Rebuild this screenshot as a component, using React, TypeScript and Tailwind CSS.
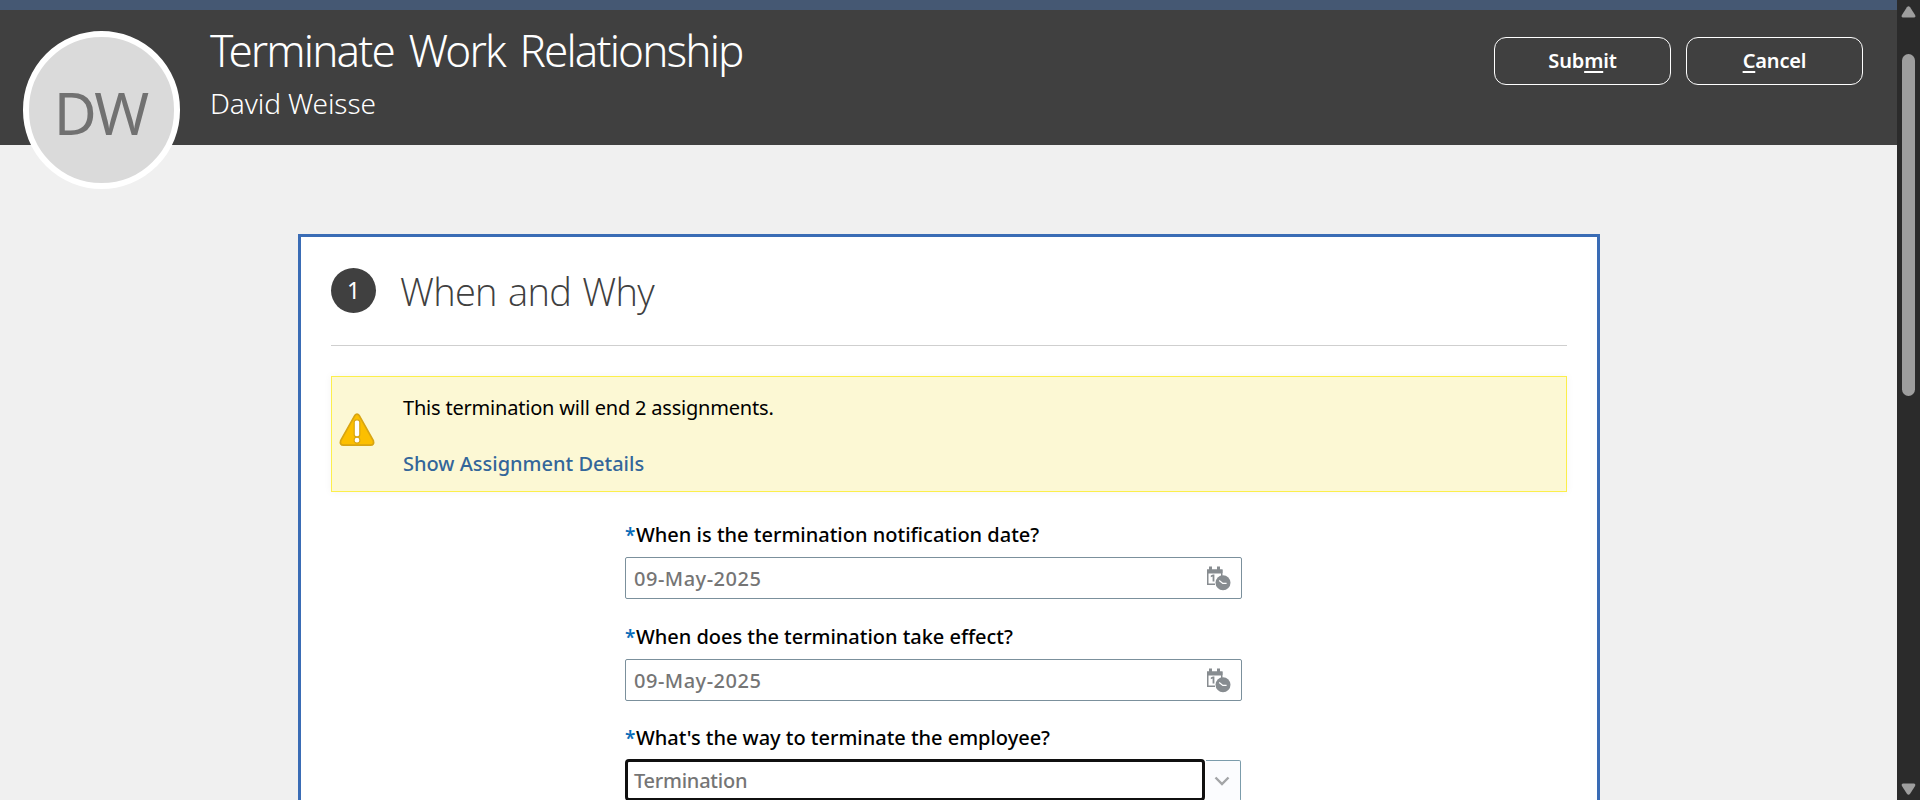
import type { ReactNode } from "react";

function WarningIcon() {
  return (
    <svg width="36" height="34" viewBox="0 0 36 34" className="block">
      <path
        d="M15.7 2.6Q18 -0.4 20.3 2.6L34.3 27.6Q35.6 32 31.4 32.2H4.6Q0.4 32 1.7 27.6Z"
        fill="#fcbf00"
        stroke="#d8a512"
        strokeWidth="1.7"
      />
      <rect x="15.2" y="6.8" width="5.6" height="17" rx="2.4" fill="#fff" stroke="#d8a512" strokeWidth="1.2" />
      <circle cx="18" cy="27.2" r="2.9" fill="#fff" stroke="#d8a512" strokeWidth="1.1" />
    </svg>
  );
}

function CalendarClockIcon() {
  return (
    <svg width="25" height="25" viewBox="0 0 25 25" className="block">
      <path d="M1 3.5H16.5V10H15V7.5H2.5V17.5H9V19H1Z" fill="#878c90" />
      <path d="M1 3.5H16.5V7H1Z" fill="#878c90" />
      <rect x="3" y="0.5" width="3" height="4.5" fill="#878c90" />
      <rect x="11" y="0.5" width="3" height="4.5" fill="#878c90" />
      <path d="M4.8 9.6L7 8.4H8.4V15.6H6.6V10.4L4.8 11.2Z" fill="#878c90" />
      <circle cx="17" cy="16.8" r="7.5" fill="#878c90" />
      <path d="M13.2 14.4L16.8 17.4H20.6" fill="none" stroke="#fff" strokeWidth="1.3" />
    </svg>
  );
}

function HeaderButton({ children }: { children: ReactNode }) {
  return (
    <button className="flex h-12 w-[177px] items-center justify-center rounded-xl border border-white text-[20px] leading-6 font-semibold tracking-[-0.15px] text-white">
      <span>{children}</span>
    </button>
  );
}

function FieldLabel({ children, className }: { children: ReactNode; className: string }) {
  return (
    <div className="flex h-[30px] items-center text-[20px] leading-[30px] font-medium whitespace-nowrap text-black">
      <span className="w-[11px] text-[19px] font-semibold text-[#0a6cb8]">*</span>
      <span className={className}>{children}</span>
    </div>
  );
}

function DateInput({ value }: { value: string }) {
  return (
    <div className="mt-[7px] flex h-[42px] items-center justify-between rounded-[2px] border border-[#7b909c] bg-white pr-2.5 pl-2 text-[20px] font-medium text-[#757575]">
      <span className="pt-px leading-7 tracking-[0.5px]">{value}</span>
      <CalendarClockIcon />
    </div>
  );
}

function Scrollbar() {
  return (
    <div className="flex h-full w-[23px] shrink-0 flex-col items-center bg-[#2b2b2b]">
      <svg width="15" height="12" viewBox="0 0 15 12" className="mt-1.5 shrink-0">
        <path d="M5.9 1.2Q7.5 -0.6 9.1 1.2L14.1 9Q14.9 11.2 13 11.4H2Q0.1 11.2 0.9 9Z" fill="#9e9e9e" />
      </svg>
      <div className="mt-9 h-[342px] w-[13px] shrink-0 rounded-full bg-[#9e9e9e]" />
      <svg width="15" height="12" viewBox="0 0 15 12" className="mt-auto mb-[5px] shrink-0 rotate-180">
        <path d="M5.9 1.2Q7.5 -0.6 9.1 1.2L14.1 9Q14.9 11.2 13 11.4H2Q0.1 11.2 0.9 9Z" fill="#9e9e9e" />
      </svg>
    </div>
  );
}

export default function App() {
  return (
    <div className="flex h-[800px] w-[1920px] overflow-hidden bg-[#f0f0f0] font-['Noto_Sans',sans-serif]">
      <div className="flex h-full w-[1897px] flex-col overflow-hidden">
        <div className="h-2.5 shrink-0 bg-[#455873]" />
        <header className="flex h-[135px] shrink-0 items-start bg-[#404040] pr-[34px] pl-[23px] text-white">
          <div className="mt-[21px] flex h-[158px] w-[157px] shrink-0 items-center justify-center rounded-full border-6 border-white bg-[#dadada]">
            <span className="pt-1 pr-0.5 text-[59px] leading-[70px] tracking-[-2px] text-[#717171]">DW</span>
          </div>
          <div className="ml-[30px] flex-1 pt-3.5 whitespace-nowrap">
            <h1 className="text-[44px] leading-[52px] font-light tracking-[-1.85px] [word-spacing:5px]">
              Terminate Work Relationship
            </h1>
            <p className="mt-[9px] text-[28px] leading-9 font-light tracking-[-0.1px]">David Weisse</p>
          </div>
          <div className="mt-[27px] flex gap-[15px]">
            <HeaderButton>
              Sub<span className="underline decoration-2 underline-offset-[3px]">m</span>it
            </HeaderButton>
            <HeaderButton>
              <span className="underline decoration-2 underline-offset-[3px]">C</span>ancel
            </HeaderButton>
          </div>
        </header>

        <main className="ml-[298px] mt-[89px] h-[640px] w-[1302px] shrink-0 border-3 border-[#3a6cb5] bg-white px-[30px]">
          <div className="flex h-[109px] items-start border-b border-[#cfcfcf]">
            <div className="mt-[31px] flex size-[45px] items-center justify-center rounded-full bg-[#404040] pb-0.5 text-[23px] leading-7 text-white">
              1
            </div>
            <h2 className="mt-[30px] ml-6 font-['Open_Sans'] text-[38px] leading-[48px] font-light tracking-[-0.7px] text-[#404040] [word-spacing:2px]">
              When and Why
            </h2>
          </div>

          <section className="mt-[30px] flex h-[116px] items-center border border-[#fcef4b] bg-[#fcf8d4] pl-[7px] shadow-[0_0_8px_rgba(0,0,0,0.05)]">
            <div className="pb-2">
              <WarningIcon />
            </div>
            <div className="ml-7 flex flex-col gap-7 pt-1 text-[20px] leading-7">
              <p className="tracking-[-0.2px] text-black">This termination will end 2 assignments.</p>
              <a className="font-medium text-[#33669a]">Show Assignment Details</a>
            </div>
          </section>

          <form className="mt-7 ml-[294px] w-[617px]">
            <FieldLabel className="tracking-normal">When is the termination notification date?</FieldLabel>
            <DateInput value="09-May-2025" />

            <div className="mt-[23px]">
              <FieldLabel className="tracking-[-0.03px]">When does the termination take effect?</FieldLabel>
              <DateInput value="09-May-2025" />
            </div>

            <div className="mt-[22px]">
              <FieldLabel className="tracking-[-0.02px]">What's the way to terminate the employee?</FieldLabel>
              <div className="mt-1.5 flex h-[42px]">
                <div className="flex w-[580px] items-center rounded-[4px] border-3 border-[#101010] bg-white pt-px pl-1.5 text-[20px] font-medium text-[#757575]">
                  <span className="leading-7 tracking-[-0.25px]">Termination</span>
                </div>
                <div className="mt-px ml-px flex w-[35px] items-center justify-center rounded-r-[2px] border border-l-0 border-[#7b9cab] bg-[#fbfcfe] pr-0.5">
                  <svg width="16" height="10" viewBox="0 0 16 10">
                    <path d="M1.5 1.5L8 8L14.5 1.5" fill="none" stroke="#a3a5a7" strokeWidth="2.4" />
                  </svg>
                </div>
              </div>
            </div>
          </form>
        </main>
      </div>
      <Scrollbar />
    </div>
  );
}
